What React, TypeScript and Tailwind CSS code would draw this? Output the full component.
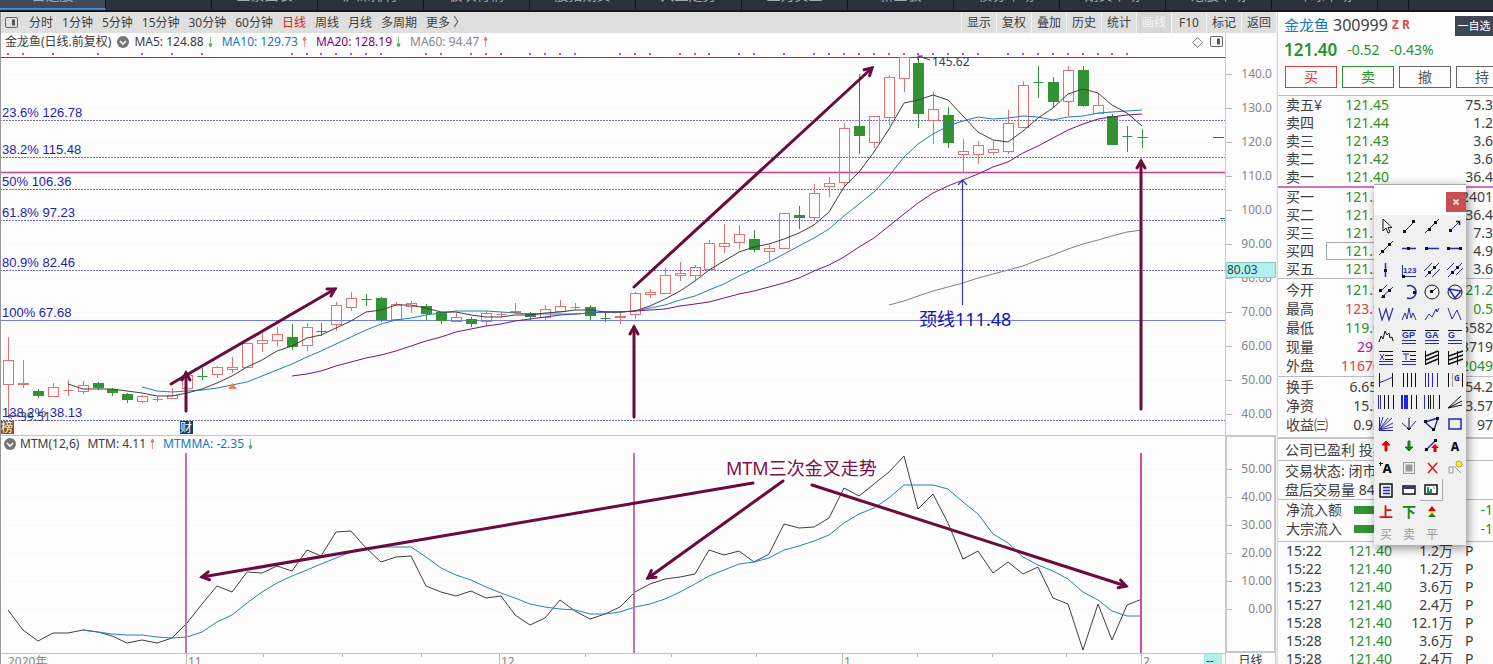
import type { ReactNode } from 'react';
import clsx from 'clsx';

type Candle = [kind: 'up' | 'down', high: number, top: number, bottom: number, low: number];

const tabs = [
  '自选股', '', '全景图表', '沪深排行', '板块行情', '股指期货', '大盘走势',
  '主力资金', '新三板', '债券市场', '期货市场', '港股市场', '环球市场',
];

const periods = [
  '分时', '1分钟', '5分钟', '15分钟', '30分钟', '60分钟',
  '日线', '周线', '月线', '多周期', '更多 〉',
];

const tools = ['显示', '复权', '叠加', '历史', '统计', '画线', 'F10', '标记', '返回'];

const candles: Candle[] = [
  ['up', 337, 360, 384, 417], ['up', 360, 383, 384, 387], ['down', 389, 391, 395, 397],
  ['up', 383, 387, 396, 396], ['up', 380, 390, 390, 395], ['up', 381, 385, 391, 393],
  ['down', 382, 383, 387, 389], ['down', 388, 389, 392, 395], ['down', 393, 394, 399, 402],
  ['up', 395, 396, 401, 402], ['up', 397, 399, 399, 401], ['up', 388, 395, 398, 398],
  ['up', 375, 375, 388, 388], ['down', 368, 376, 376, 379], ['up', 366, 367, 374, 377],
  ['up', 357, 367, 369, 372], ['up', 343, 343, 367, 367], ['up', 333, 340, 343, 351],
  ['up', 327, 334, 340, 345], ['down', 324, 337, 346, 349], ['up', 323, 327, 345, 350],
  ['down', 323, 331, 331, 335], ['up', 302, 305, 324, 330], ['up', 292, 298, 307, 310],
  ['down', 294, 299, 299, 305], ['down', 297, 298, 319, 321], ['up', 302, 304, 319, 319],
  ['up', 301, 303, 306, 312], ['down', 304, 306, 313, 320], ['down', 312, 312, 320, 323],
  ['up', 313, 317, 321, 321], ['down', 317, 319, 323, 326], ['up', 311, 313, 321, 325],
  ['up', 312, 314, 314, 317], ['up', 303, 311, 312, 313], ['down', 312, 313, 316, 319],
  ['up', 305, 309, 317, 319], ['up', 300, 306, 311, 311], ['up', 303, 307, 307, 309],
  ['down', 305, 307, 315, 319], ['down', 313, 318, 318, 321], ['up', 312, 316, 317, 323],
  ['up', 292, 293, 314, 318], ['up', 289, 292, 294, 297], ['up', 268, 275, 293, 293],
  ['up', 262, 273, 275, 280], ['up', 265, 267, 275, 279], ['up', 240, 243, 269, 269],
  ['up', 224, 243, 246, 252], ['up', 225, 234, 242, 248], ['down', 230, 239, 249, 251],
  ['up', 245, 248, 251, 260], ['up', 213, 213, 248, 248], ['down', 206, 215, 217, 228],
  ['up', 184, 193, 217, 220], ['up', 177, 183, 186, 196], ['up', 123, 128, 182, 186],
  ['down', 74, 126, 135, 153], ['up', 116, 116, 142, 147], ['up', 75, 77, 117, 124],
  ['up', 57, 57, 78, 91], ['down', 57, 63, 113, 127], ['up', 92, 109, 120, 143],
  ['down', 107, 115, 142, 147], ['up', 139, 151, 154, 172], ['up', 141, 145, 154, 163],
  ['up', 141, 149, 152, 154], ['up', 110, 123, 151, 153], ['up', 81, 85, 127, 127],
  ['down', 66, 82, 82, 97], ['down', 77, 82, 101, 107], ['up', 66, 70, 101, 115],
  ['down', 66, 70, 105, 106], ['up', 93, 105, 113, 113], ['down', 114, 116, 144, 144],
  ['down', 126, 136, 136, 151], ['down', 129, 137, 137, 147],
];

const ma5 = [
  384, 389, 389, 389, 391, 393, 396, 396, 393, 389, 383, 376, 367, 360, 351, 346, 338, 335, 328,
  321, 312, 310, 305, 305, 308, 312, 312, 315, 317, 317, 315, 315, 313, 312, 310, 310, 312, 312,
  311, 306, 299, 291, 281, 270, 261, 252, 247, 244, 239, 233, 225, 212, 187, 172, 152, 129, 103,
  100, 95, 100, 116, 132, 140, 142, 131, 118, 108, 94, 89, 93, 105, 113, 126,
];

const ma10 = [
  387, 391, 392, 391, 390, 388, 385, 382, 376, 370, 364, 357, 351, 344, 337, 330, 324, 320, 318,
  315, 313, 311, 311, 311, 312, 313, 314, 314, 314, 314, 313, 312, 312, 311, 308, 305, 300, 296,
  290, 284, 276, 269, 262, 254, 246, 238, 229, 216, 204, 192, 176, 157, 144, 134, 126, 121, 117,
  119, 118, 116, 117, 120, 117, 116, 113, 112, 111, 110,
];

const ma20 = [
  376, 374, 371, 366, 362, 358, 355, 351, 346, 341, 337, 332, 329, 326, 324, 321, 319, 317, 315,
  314, 313, 312, 312, 311, 310, 309, 306, 304, 302, 298, 294, 291, 287, 283, 278, 271, 265, 257,
  247, 238, 226, 214, 203, 193, 186, 180, 174, 167, 162, 153, 146, 138, 130, 124, 119, 117, 115,
  114,
];

const ma60 = [305, 301, 296, 291, 287, 283, 278, 274, 270, 266, 260, 255, 249, 244, 240, 236, 232, 230];

const mtm = [
  610, 630, 641, 633, 633, 630, 632, 636, 643, 640, 643, 638, 623, 604, 586, 592, 572, 573, 566,
  571, 550, 556, 532, 531, 548, 562, 557, 556, 586, 592, 596, 591, 598, 596, 615, 625, 618, 600,
  611, 619, 614, 607, 592, 584, 579, 577, 574, 550, 555, 551, 562, 554, 524, 528, 527, 518, 488,
  496, 484, 472, 456, 509, 494, 523, 559, 551, 573, 562, 574, 567, 598, 604, 650, 604, 640, 605,
  599,
];

const mtmMa = [
  630, 632, 634, 635, 635, 637, 638, 637, 632, 622, 615, 603, 592, 583, 576, 570, 564, 558, 552,
  548, 547, 547, 547, 557, 568, 575, 580, 587, 593, 598, 604, 607, 609, 610, 614, 614, 612, 607,
  604, 599, 592, 584, 576, 570, 564, 562, 558, 550, 546, 541, 535, 523, 514, 508, 498, 485, 485,
  485, 489, 502, 514, 534, 543, 557, 565, 571, 579, 592, 600, 611, 616, 616,
];

const signalDays = [
  0, 1, 3, 6, 9, 11, 13, 19, 20, 21, 22, 23, 24, 25, 28, 29, 31, 32, 33, 35, 36, 37, 38, 41, 42,
  43, 45, 46, 47, 49, 50, 52, 54, 55, 56, 57, 58, 59, 60, 61, 62, 63, 64, 65, 67, 68, 69, 70, 71,
  72, 73, 74, 75,
];

const levels = [
  { y: 120, label: '23.6% 126.78' },
  { y: 157, label: '38.2% 115.48' },
  { y: 189, label: '50% 106.36' },
  { y: 220, label: '61.8% 97.23' },
  { y: 270, label: '80.9% 82.46' },
  { y: 320, label: '100% 67.68', solid: true },
  { y: 420, label: '138.2% 38.13' },
];

const priceTicks = [
  { y: 74, label: '140.0' },
  { y: 108, label: '130.0' },
  { y: 142, label: '120.0' },
  { y: 176, label: '110.0' },
  { y: 210, label: '100.0' },
  { y: 244, label: '90.00' },
  { y: 278, label: '80.00' },
  { y: 312, label: '70.00' },
  { y: 346, label: '60.00' },
  { y: 380, label: '50.00' },
  { y: 414, label: '40.00' },
];

const mtmTicks = [
  { y: 469, label: '50.00' },
  { y: 497, label: '40.00' },
  { y: 525, label: '30.00' },
  { y: 553, label: '20.00' },
  { y: 581, label: '10.00' },
  { y: 609, label: '0.00' },
];

const dayX = (i: number) => Math.round(8 + i * 14.925);

const toPoints = (values: number[], start = 0) =>
  values.map((y, i) => `${dayX(i + start)},${y}`).join(' ');

const Series = ({ values, start, color }: { values: number[]; start?: number; color: string }) => (
  <polyline points={toPoints(values, start)} fill="none" stroke={color} />
);

const Arrow = ({ from, to }: { from: [number, number]; to: [number, number] }) => {
  const angle = (Math.atan2(to[1] - from[1], to[0] - from[0]) * 180) / Math.PI;
  return (
    <g stroke="#6b0b3d" strokeWidth="3" strokeLinecap="round" fill="none">
      <line x1={from[0]} y1={from[1]} x2={to[0]} y2={to[1]} />
      <path d="M-7 -4 L0 0 L-7 4" transform={`translate(${to[0]} ${to[1]}) rotate(${angle})`} />
    </g>
  );
};

const CandleShape = ({ data, index }: { data: Candle; index: number }) => {
  const [kind, high, top, bottom, low] = data;
  const x = dayX(index) + 0.5;
  const color = kind === 'up' ? '#e8706d' : '#339234';
  return (
    <g stroke={color} fill={kind === 'up' ? '#fdfdfd' : color}>
      <line x1={x} y1={high} x2={x} y2={top} />
      <line x1={x} y1={bottom} x2={x} y2={low + 1} />
      {top === bottom ? (
        <line x1={x - 5} y1={top + 0.5} x2={x + 5} y2={top + 0.5} />
      ) : (
        <rect x={x - 5} y={top + 0.5} width="10" height={bottom - top} fillOpacity={kind === 'up' ? 0 : 1} />
      )}
    </g>
  );
};

const Trend = ({ up }: { up?: boolean }) => (
  <svg width="5" height="12" className="ml-1 shrink-0" fill="none" stroke={up ? '#ee5a52' : '#3aa040'}>
    <path d="M2.5 1V11" strokeOpacity=".6" />
    <path d={up ? 'M1 4L2.5 1L4 4Z' : 'M1 8L2.5 11L4 8Z'} />
  </svg>
);

const Toggle = () => (
  <button aria-label="指标菜单" className="shrink-0">
    <svg width="12" height="12" className="block">
      <circle cx="6" cy="6" r="6" fill="#747474" />
      <path d="M3 5L6 8L9 5" fill="none" stroke="#fff" strokeWidth="1.6" />
    </svg>
  </button>
);

const PanelIcon = () => (
  <svg width="13" height="12" className="block" fill="none" stroke="#666">
    <rect x=".5" y=".5" width="12" height="10" rx="1.5" />
    <rect x="7" y="2.5" width="3" height="6" fill="#555" stroke="none" />
  </svg>
);

const AxisLabels = ({ ticks }: { ticks: { y: number; label: string }[] }) =>
  ticks.map(({ y, label }) => (
    <g key={label}>
      <line x1="0" x2="6" y1={y + 0.5} y2={y + 0.5} stroke="#b5b5b5" />
      <text x="46" y={y + 4} textAnchor="end" fontSize="12" fill="#868686">
        {label}
      </text>
    </g>
  ));

const Grid = ({ ticks }: { ticks: { y: number }[] }) =>
  ticks.map(({ y }) => (
    <line key={y} x1="0" x2="100%" y1={y + 0.5} y2={y + 0.5} stroke="#e9e9e9" strokeDasharray="1 3" />
  ));

const PricePane = () => (
  <section className="flex border-b border-[#c4c4c4]">
    <div className="min-w-0 flex-1">
      <div className="flex h-[18px] items-center pr-0.5 pl-1 text-xs whitespace-nowrap text-[#3c3c3c]">
        <span className="mr-1.5">金龙鱼(日线.前复权)</span>
        <Toggle />
        <span className="ml-[5px]">MA5: 124.88</span>
        <Trend />
        <span className="ml-[9px] text-[#1478c8]">MA10: 129.73</span>
        <Trend up />
        <span className="ml-[9px] text-[#800080]">MA20: 128.19</span>
        <Trend />
        <span className="ml-[9px] text-[#888]">MA60: 94.47</span>
        <Trend up />
        <div className="ml-auto flex items-center gap-[7px]">
          <svg width="11" height="11" fill="none" stroke="#777">
            <path d="M5.5 .7L10.3 5.5L5.5 10.3L.7 5.5Z" />
          </svg>
          <PanelIcon />
        </div>
      </div>
      <svg className="block h-[384px] w-full">
        <g transform="translate(-1 -51)">
          <Grid ticks={priceTicks} />
          {signalDays.map((day) => (
            <rect key={day} x={dayX(day) - 1} y="53" width="2" height="2" fill="#cc3fcc" />
          ))}
          <line x1="0" x2="101%" y1="57.5" y2="57.5" stroke="#4a4a8c" />
          {levels.map(({ y, label, solid }) => (
            <line
              key={label}
              x1="0"
              x2="101%"
              y1={y + 0.5}
              y2={y + 0.5}
              stroke={solid ? '#6f7fdc' : '#5050b4'}
              strokeDasharray={solid ? undefined : '2 1'}
              strokeOpacity={solid ? 1 : 0.8}
            />
          ))}
          <line x1="0" x2="101%" y1="172.5" y2="172.5" stroke="#c8409a" strokeWidth="1.4" />
          {candles.map((candle, i) => (
            <CandleShape key={i} data={candle} index={i} />
          ))}
          <Series values={ma60} start={59} color="#808080" />
          <Series values={ma20} start={19} color="#7b1482" />
          <Series values={ma10} start={9} color="#1f7fc4" />
          <Series values={ma5} start={4} color="#404040" />
          <path d="M228 389L232.500 383L237 389Z" fill="#ee8255" />
          <g stroke="#404060" fill="none">
            <path d="M930 60L918 56M918 60V56H923" />
            <path d="M20 416H8M12 413L8 416L12 419" />
          </g>
          <g fontSize="12" fill="#404040">
            <text x="932" y="66">145.62</text>
            <text x="20" y="421">39.51</text>
          </g>
          <g fontSize="13" fill="#2222b4" className="font-['Liberation_Sans',sans-serif]">
            {levels.map(({ y, label }) => (
              <text key={label} x="2" y={y - 3}>
                {label}
              </text>
            ))}
          </g>
          <rect x="1" y="421" width="13" height="13" fill="#8a5014" />
          <rect x="180" y="421" width="13" height="13" fill="#143c70" />
          <g fontSize="12" fill="#fff" textAnchor="middle">
            <text x="7" y="432">榜</text>
            <text x="186" y="432">财</text>
          </g>
          <Arrow from={[171, 384]} to={[335, 289]} />
          <Arrow from={[186, 411]} to={[186, 373]} />
          <Arrow from={[634, 417]} to={[634, 327]} />
          <Arrow from={[634, 287]} to={[872, 68]} />
          <Arrow from={[1141, 409]} to={[1141, 161]} />
          <path d="M962.500 305V180M958 185L962.500 180L967 185" fill="none" stroke="#3434b8" strokeWidth="1.2" />
          <text x="919" y="326" fontSize="18" fill="#1414b4">颈线111.48</text>
          <line x1="1213" x2="1224" y1="137.5" y2="137.5" stroke="#555" />
          <line x1="1220" x2="1225" y1="218.5" y2="218.5" stroke="#2a7a7a" />
        </g>
      </svg>
    </div>
    <svg className="w-[51px] shrink-0 border-l border-[#ccc]">
      <g transform="translate(0 -33)">
        <AxisLabels ticks={priceTicks} />
        <rect x="0" y="262.500" width="49.500" height="15" fill="#b2f0ee" stroke="#8cc4c4" />
        <text x="1" y="274" fontSize="12" fill="#224848">80.03</text>
      </g>
    </svg>
  </section>
);

const MtmPane = () => (
  <section className="flex">
    <div className="min-w-0 flex-1">
      <div className="flex h-4 items-center pl-[3px] text-xs whitespace-nowrap text-[#3c3c3c]">
        <Toggle />
        <span className="ml-1">MTM(12,6)</span>
        <span className="ml-2">MTM: 4.11</span>
        <Trend up />
        <span className="ml-2 text-[#1478c8]">MTMMA: -2.35</span>
        <Trend />
      </div>
      <svg className="block h-[201px] w-full">
        <g transform="translate(-1 -452)">
          <Grid ticks={mtmTicks} />
          <Series values={mtm} color="#404040" />
          <Series values={mtmMa} start={5} color="#2080cc" />
          <g strokeWidth="2">
            <line x1="186" x2="186" y1="453" y2="653" stroke="#cc70ac" />
            <line x1="634" x2="634" y1="453" y2="653" stroke="#cc70ac" />
            <line x1="1141" x2="1141" y1="453" y2="653" stroke="#e0489c" />
          </g>
          <Arrow from={[753, 483]} to={[202, 577]} />
          <Arrow from={[783, 481]} to={[648, 578]} />
          <Arrow from={[812, 485]} to={[1126, 586]} />
          <text x="726" y="475" fontSize="18" fill="#80104c">MTM三次金叉走势</text>
        </g>
      </svg>
    </div>
    <svg className="w-[51px] shrink-0 border-2 border-t border-[#c8c8c8]">
      <g transform="translate(-1 -437)">
        <AxisLabels ticks={mtmTicks} />
      </g>
    </svg>
  </section>
);

const monthTicks = [
  { x: 186, label: '11' },
  { x: 499, label: '12' },
  { x: 842, label: '1' },
  { x: 1141, label: '2' },
];

const TimeAxis = () => (
  <div className="flex h-3 shrink-0 overflow-hidden text-xs">
    <svg className="h-3 min-w-0 flex-1 border-t border-[#c4c4c4]" fill="#868686" fontSize="12">
      <g transform="translate(-1 0)">
        <text x="8" y="12">2020年</text>
        {[263, 342, 421, 585, 671, 756, 917, 992, 1066].map((x) => (
          <line key={x} x1={x + 0.5} x2={x + 0.5} y1="0" y2="3" stroke="#bbb" />
        ))}
        {monthTicks.map(({ x, label }) => (
          <g key={label}>
            <line x1={x + 0.5} x2={x + 0.5} y1="0" y2="12" stroke="#bbb" />
            <text x={x + 2} y="12">{label}</text>
          </g>
        ))}
        <rect x="1204" y="0" width="18" height="12" fill="#b2f0ee" />
        <text x="1206" y="11" fill="#224848">--</text>
      </g>
    </svg>
    <div className="w-[51px] shrink-0 border-x border-[#ccc] text-center leading-4 text-[#333]">日线</div>
  </div>
);

const B = '#2a2ab0';
const K = '#111';

const Dots = ({ at }: { at: [number, number][] }) =>
  at.map(([x, y]) => <rect key={`${x}-${y}`} x={x - 1} y={y - 1} width="3" height="3" fill={K} stroke="none" />);

const Glyph = ({ children, fill, size = 15, bold }: { children: string; fill: string; size?: number; bold?: boolean }) => (
  <text x="11" y="15" textAnchor="middle" fontSize={size} fontWeight={bold ? 700 : 400} fill={fill} stroke="none">
    {children}
  </text>
);

const Label = ({ children }: { children: string }) => (
  <text x="4" y="12" fontSize="9" fontWeight="700" fill={B} stroke="none" className="font-['Liberation_Sans',sans-serif]">
    {children}
  </text>
);

const drawTools: { name: string; icon: ReactNode; pressed?: boolean }[] = [
  { name: '选择', icon: <path d="M8 3V15L11 12L13 17L15 16L13 11.500H17Z" stroke={K} fill="#fff" /> },
  { name: '线段', icon: <><path d="M7 15L16 6" /><Dots at={[[6, 15], [15, 5]]} /></> },
  { name: '直线', icon: <><path d="M4 17L18 3" /><Dots at={[[8, 13], [14, 6]]} /></> },
  { name: '箭头', icon: <><path d="M6 15L16 5" /><path d="M12 5.500H15.500V9" stroke={K} strokeWidth="1.5" /><Dots at={[[6, 14]]} /></> },
  { name: '射线', icon: <><path d="M4 17L18 3" /><Dots at={[[7, 13], [14, 6]]} /></> },
  { name: '水平线', icon: <><path d="M4 10.500H18" strokeWidth="1.5" /><Dots at={[[10, 10]]} /></> },
  { name: '水平射线', icon: <><path d="M5 10.500H18" strokeWidth="1.5" /><Dots at={[[5, 10]]} /></> },
  { name: '水平线段', icon: <><path d="M5 10.500H17" strokeWidth="1.5" /><Dots at={[[4, 10], [16, 10]]} /></> },
  { name: '垂直线', icon: <><path d="M10.500 3V17" strokeWidth="1.5" /><Dots at={[[10, 10]]} /></> },
  { name: '刻度', icon: <><text x="5" y="13" fontSize="8" fontWeight="700" fill={B} stroke="none" className="font-['Liberation_Sans',sans-serif]">123</text><path d="M5 16.500H18" /><path d="M4.500 5V16" /><Dots at={[[5, 16]]} /></> },
  { name: '平行线', icon: <><path d="M3 11L11 3M4 17L18 3M11 17L19 9" /><Dots at={[[8, 12], [13, 7]]} /></> },
  { name: '等距线', icon: <><path d="M3 10L10 3M4 17L18 3M12 15L19 8" /><Dots at={[[8, 12], [13, 7]]} /></> },
  { name: '平行线段', icon: <><path d="M6 9L12 3M6 16L18 5" /><Dots at={[[5, 8], [8, 14], [14, 8]]} /></> },
  { name: '圆弧', icon: <><path d="M9 4A6.500 6.500 0 1 1 9 16" strokeWidth="1.5" /><Dots at={[[16, 10]]} /></> },
  { name: '圆', icon: <><circle cx="11" cy="10" r="7" stroke={K} /><path d="M11 10L15 6" /><Dots at={[[10, 9]]} /></> },
  { name: '外接圆', icon: <><circle cx="11" cy="10" r="7" stroke={K} /><path d="M5 7L17 9L11 16Z" strokeWidth="1.5" /></> },
  { name: '波浪线', icon: <path d="M4 4L7 16L11 5L14 16L18 4" strokeWidth="1.2" /> },
  { name: '五浪线', icon: <path d="M4 16L7 9L9 15L11 4L13 14L15 9L18 16" /> },
  { name: '上升浪', icon: <path d="M4 16L8 10L11 13L15 5L16 8L18 4" /> },
  { name: '下降浪', icon: <path d="M4 4L8 15L13 6L17 16" /> },
  { name: '头肩形', icon: <path d="M4 16L6 10L8 13L10 5L12 9L14 7L15 12L17 11L18 15" stroke={K} /> },
  { name: '黄金价位', icon: <><path d="M4 4.500H18" stroke={K} /><Label>GP</Label><path d="M4 14.500H18M4 17.500H18" /></> },
  { name: '黄金目标', icon: <><path d="M4 4.500H18" stroke={K} /><Label>GA</Label><path d="M4 14.500H18M4 17.500H18" /></> },
  { name: '黄金分割', icon: <><path d="M4 4.500H18" stroke={K} /><Label>G</Label><path d="M4 14.500H18M4 17.500H18" /></> },
  { name: '百分比', icon: <><path d="M4 3.500H18M10 7.500H18M10 11.500H18" stroke={K} /><path d="M5 6L9 12M9 6L5 12M4 13.500H18M4 16.500H18" /></> },
  { name: '波段线', icon: <><path d="M4 3.500H18M12 7.500H18M12 11.500H18" stroke={K} /><path d="M5 6H11M8 6V12M4 13.500H18M4 16.500H18" /></> },
  { name: '回归通道', icon: <><path d="M4.500 3V17M17.500 3V17" stroke={K} /><path d="M5 8L17 3M5 12L17 7M5 16L17 11" stroke={K} strokeWidth="1.5" /></> },
  { name: '延长通道', icon: <><path d="M4.500 3V17M13.500 3V17" stroke={K} /><path d="M5 8L19 3M5 12L19 7M5 16L19 11" stroke={K} strokeWidth="1.5" /></> },
  { name: '线性回归', icon: <><path d="M4.500 3V17M17.500 3V17" stroke={K} /><path d="M4 13L18 7" /></> },
  { name: '周期线', icon: <path d="M5.500 3V17M9.500 3V17M13.500 3V17M17.500 3V17" stroke={K} /> },
  { name: '等周期线', icon: <path d="M4.500 3V17M7.500 3V17M11.500 3V17M16.500 3V17" stroke="#2222e0" /> },
  { name: '黄金周期', icon: <><path d="M4.500 3V17M18.500 3V17" stroke={K} /><path d="M8.500 3V17" stroke="#999" /><text x="10" y="11" fontSize="8" fontWeight="700" fill={B} stroke="none">G</text></> },
  { name: '费氏周期', icon: <><path d="M3.500 3V17M5.500 3V17" /><path d="M9.500 3V17M13.500 3V17M18.500 3V17" stroke={K} /></> },
  { name: '螺旋周期', icon: <><path d="M4 3V17M7 3V17M9 3V17" stroke="#2222e0" strokeWidth="2" /><path d="M13.500 3V17M18.500 3V17" stroke={K} /></> },
  { name: '时间周期', icon: <><path d="M3.500 3V17M12.500 3V17" /><path d="M7.500 3V17M9.500 3V17M18.500 3V17" stroke={K} /></> },
  { name: '阻速线', icon: <path d="M4 16L17 4M4 16L18 9M4 16L18 13" stroke={K} /> },
  { name: '甘氏线', icon: <path d="M4.500 3V16.500H18M4 16L8 3M4 16L13 4M4 16L17 4M4 16L18 9M4 16L18 13" /> },
  { name: '分叉线', icon: <><path d="M4 9L11 15L18 7" /><path d="M11 4V16M9 14L11 16L13 14" stroke={K} /></> },
  { name: '三角形', icon: <><path d="M4 8L17 4L13 16Z" strokeWidth="1.5" /><Dots at={[[4, 7], [16, 4], [12, 15]]} /></> },
  { name: '矩形', icon: <rect x="5" y="5" width="12" height="10" strokeWidth="1.5" /> },
  { name: '向上标记', icon: <path d="M11 5L15 9H12V15H10V9H7Z" fill="#e00000" stroke="#e00000" /> },
  { name: '向下标记', icon: <path d="M11 15L15 11H12V5H10V11H7Z" fill="#128012" stroke="#128012" /> },
  { name: '趋势标记', icon: <><path d="M4 15L15 4" strokeWidth="1.5" /><Dots at={[[5, 13], [14, 4]]} /><path d="M14 8L18 12H15.500V16H12.500V12H10Z" fill="#e00000" stroke="none" /></> },
  { name: '文字', icon: <text x="11" y="15" textAnchor="middle" fontSize="12" fontWeight="800" fill={K} stroke="none">A</text> },
  { name: '加注文字', icon: <><text x="12" y="15" textAnchor="middle" fontSize="13" fontWeight="800" fill={K} stroke="none">A</text><path d="M4 5.500H8M5.500 4V8" stroke={K} /></> },
  { name: '隐藏', icon: <><rect x="5.500" y="4.500" width="11" height="11" stroke="#999" /><rect x="8" y="7" width="6" height="6" fill="#999" stroke="#999" /></> },
  { name: '删除', icon: <path d="M7 5L16 15M16 5L7 15" stroke="#e01818" strokeWidth="1.6" /> },
  { name: '属性', icon: <><circle cx="15" cy="6" r="3" fill="#f4ee3c" stroke="#b8b020" /><path d="M10 8L17 15M5 9H9V15H5Z" stroke="#999" /></> },
  { name: '列表', icon: <><rect x="5" y="4" width="12" height="13" stroke={K} strokeWidth="1.5" /><path d="M8 7.500H15M8 10.500H15M8 13.500H15" strokeWidth="1.500" /></> },
  { name: '窗口', icon: <><rect x="5" y="6" width="12" height="8" stroke={K} fill="#fff" strokeWidth="1.5" /><path d="M6 8H16" strokeWidth="2" /></> },
  { name: '图形', pressed: true, icon: <><rect x="5" y="5" width="12" height="9" stroke={K} fill="#fff" strokeWidth="1.5" /><path d="M8 7V12H11V9" stroke="#189070" strokeWidth="2" /><path d="M13 8H15" stroke="#189070" /></> },
  { name: '', icon: null },
  { name: '上', icon: <Glyph fill="#e01010" size={14} bold>上</Glyph> },
  { name: '下', icon: <Glyph fill="#148a14" size={14} bold>下</Glyph> },
  { name: '多空', icon: <><path d="M11 4L15 9H7Z" fill="#e00000" stroke="none" /><path d="M7 9H15L11 12Z" fill="#f2d818" stroke="none" /><path d="M11 11L15 15H7Z" fill="#128012" stroke="none" /></> },
  { name: '', icon: null },
  { name: '买', icon: <Glyph fill="#999" size={12}>买</Glyph> },
  { name: '卖', icon: <Glyph fill="#999" size={12}>卖</Glyph> },
  { name: '平', icon: <Glyph fill="#999" size={12}>平</Glyph> },
];

const DrawPalette = () => (
  <div className="absolute top-[172px] right-[27px] w-[92px] border-t border-[#aaa] bg-[#f0f0f0] shadow-[2px_3px_10px_rgba(0,0,0,0.45)]">
    <div className="flex h-[30px] items-end justify-end bg-white pb-[3px]">
      <button aria-label="关闭" className="flex size-5 items-center justify-center bg-[#c75050]">
        <svg width="8" height="8" stroke="#fff" strokeWidth="1.6">
          <path d="M1.500 1.500L6.500 6.500M6.500 1.500L1.500 6.500" />
        </svg>
      </button>
    </div>
    <div className="grid grid-cols-4">
      {drawTools.map(({ name, icon, pressed }, i) =>
        icon ? (
          <button
            key={i}
            aria-label={name}
            className={clsx(
              'flex h-[22px] items-center justify-center',
              pressed && 'border-r border-b border-[#aaa] bg-[#f6f6f6]',
            )}
          >
            <svg width="22" height="20" className="shrink-0" fill="none" stroke={B}>
              {icon}
            </svg>
          </button>
        ) : (
          <span key={i} />
        ),
      )}
    </div>
  </div>
);

const green = 'text-[#2a922c]';
const red = 'text-[#e0403c]';

type Row = [label: string, value: string, tone: string, extra: string, extraTone?: string];

const asks: Row[] = [
  ['卖五¥', '121.45', green, '75.3'],
  ['卖四', '121.44', green, '1.2'],
  ['卖三', '121.43', green, '3.6'],
  ['卖二', '121.42', green, '3.6'],
  ['卖一', '121.40', green, '36.4'],
];

const bids: Row[] = [
  ['买一', '121.39', green, '2401'],
  ['买二', '121.38', green, '36.4'],
  ['买三', '121.37', green, '7.3'],
  ['买四', '121.36', green, '4.9'],
  ['买五', '121.35', green, '3.6'],
];

const today: Row[] = [
  ['今开', '121.92', green, '121.2', green],
  ['最高', '123.92', red, '0.5', green],
  ['最低', '119.01', green, '5582'],
  ['现量', '2911', 'text-[#b414b4]', '3719'],
  ['外盘', '116702', red, '2049', green],
];

const ratios: Row[] = [
  ['换手', '6.65%', '', '54.2'],
  ['净资', '15.21', '', '3.57'],
  ['收益㈢', '0.921', '', '97'],
];

const trades = [
  ['15:22', '1.2万'],
  ['15:22', '1.2万'],
  ['15:23', '3.6万'],
  ['15:27', '2.4万'],
  ['15:28', '12.1万'],
  ['15:28', '3.6万'],
  ['15:28', '2.4万'],
];

const QuoteTable = ({ rows, tall }: { rows: Row[]; tall?: boolean }) => (
  <table className="w-full table-fixed">
    <tbody>
      {rows.map(([label, value, tone, extra, extraTone]) => (
        <tr key={label} className={tall ? 'leading-[19px]' : 'leading-[18px]'}>
          <th scope="row" className="w-12 p-0 pl-2 text-left font-normal whitespace-nowrap">{label}</th>
          <td
            className={clsx(
              'w-[63px] p-0 text-right',
              tone,
              label === '买四' && 'outline -outline-offset-1 outline-[#aaa]',
            )}
          >
            {value}
          </td>
          <td className={clsx('p-0 text-right', extraTone)}>{extra}</td>
        </tr>
      ))}
    </tbody>
  </table>
);

const tradeButtons = [
  { label: '买', tone: 'border-[#e0403c] text-[#e0403c]' },
  { label: '卖', tone: 'border-[#2a922c] text-[#2a922c]' },
  { label: '撤', tone: 'border-[#666] text-[#555]' },
  { label: '持', tone: 'border-[#666] text-[#555]' },
];

const QuotePanel = () => (
  <aside className="relative w-[215px] shrink-0 text-sm text-[#404040]">
    <div className="overflow-hidden">
      <div className="flex h-[26px] items-center pl-[6px] text-base whitespace-nowrap">
        <span className="text-[15px] text-[#1478c8]">金龙鱼</span>
        <span className="ml-1">300999</span>
        <span className="ml-1 text-xs font-bold text-[#ee4444]">Z R</span>
        <button className="mt-0.5 ml-auto h-5 w-[38px] bg-[#3f4656] text-[11px] text-white">一自选</button>
      </div>
      <div className={clsx('flex h-6 items-center gap-[10px] pl-[6px]', green)}>
        <strong className="text-[17px] font-semibold">121.40</strong>
        <span>-0.52</span>
        <span>-0.43%</span>
      </div>
      <div className="flex h-[34px] items-center gap-[5px] border-b border-[#bbb] pt-1 pb-2 pl-[7px]">
        {tradeButtons.map(({ label, tone }) => (
          <button key={label} className={clsx('h-[22px] w-[52px] shrink-0 border leading-5', tone)}>
            {label}
          </button>
        ))}
      </div>
      <div className="border-b-2 border-[#cc74b8]">
        <QuoteTable rows={asks} />
      </div>
      <div className="border-b border-[#bbb]">
        <QuoteTable rows={bids} />
      </div>
      <div className="border-b border-[#bbb] pt-px pb-px">
        <QuoteTable rows={today} tall />
      </div>
      <div className="border-b-2 border-[#c4c4c4] pb-[3px]">
        <QuoteTable rows={ratios} tall />
      </div>
      <p className="border-b border-[#bbb] pl-[7px] leading-[21px] whitespace-nowrap">公司已盈利 投票权无差异</p>
      <div className="border-b border-[#bbb] pl-[7px] leading-[19px] whitespace-nowrap">
        <p>交易状态: 闭市</p>
        <p>盘后交易量 84</p>
      </div>
      <div className="border-b border-[#bbb] pb-[3px]">
        {['净流入额', '大宗流入'].map((label) => (
          <div key={label} className="flex items-center pl-2 leading-[19px]">
            <span className="w-[68px]">{label}</span>
            <span className="h-2 w-10 bg-[#339234]" />
            <span className={clsx('ml-auto', green)}>-1</span>
          </div>
        ))}
      </div>
      <table className="w-full table-fixed leading-[18px]">
        <tbody>
          {trades.map(([time, volume], i) => (
            <tr key={i}>
              <td className="w-[58px] p-0 pl-2">{time}</td>
              <td className={clsx('w-14 p-0 text-right', green)}>121.40</td>
              <td className="w-[61px] p-0 text-right">{volume}</td>
              <td className="p-0 pl-3">P</td>
            </tr>
          ))}
        </tbody>
      </table>
    </div>
    <DrawPalette />
  </aside>
);

export default function App() {
  return (
    <div className="flex h-screen flex-col overflow-hidden bg-[#fdfdfd] font-['Noto_Sans','Noto_Sans_CJK_SC',sans-serif]">
      <nav className="flex h-3 shrink-0 overflow-hidden border-b-2 border-[#15171c] bg-[#2b303c] text-sm leading-[14px] text-[#a4a9b3]">
        {tabs.map((tab, i) => (
          <a
            key={i}
            href="#"
            className={clsx(
              'flex w-[106px] shrink-0 items-end justify-center border-r border-[#14161b]',
              i === 0 ? 'border-b-2 border-b-[#3c8ad8] bg-[#414958] pb-[6px]' : 'pb-2',
            )}
          >
            {tab}
          </a>
        ))}
        <span className="w-[31px] border-r border-[#14161b]" />
      </nav>
      <div className="flex min-h-0 flex-1">
        <main className="flex min-w-0 flex-1 flex-col border-l border-[#999]">
          <div className="flex h-[21px] shrink-0 items-center bg-[#dfdfdf] text-xs whitespace-nowrap text-[#404040]">
            <button aria-label="侧栏" className="ml-1">
              <PanelIcon />
            </button>
            <div className="ml-[11px] flex flex-1 gap-[9px]">
              {periods.map((period) => (
                <button key={period} className={period === '日线' ? 'text-[#e02020]' : ''}>
                  {period}
                </button>
              ))}
            </div>
            {tools.map((tool) => (
              <button
                key={tool}
                className={clsx(
                  'h-full w-[35px] border-l border-[#f4f4f4]',
                  tool === '画线' && 'bg-[#d6d6d6] text-[#f6f6f6]',
                )}
              >
                {tool}
              </button>
            ))}
          </div>
          <PricePane />
          <MtmPane />
          <TimeAxis />
        </main>
        <div className="w-[2px] shrink-0 border-r border-[#d8d8d8] bg-[#f2f2f2]" />
        <QuotePanel />
      </div>
    </div>
  );
}
